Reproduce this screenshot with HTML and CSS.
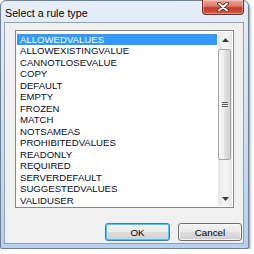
FILE: index.html
```html
<!DOCTYPE html>
<html>
<head>
<meta charset="utf-8">
<link rel="stylesheet" href="styles.css">
</head>
<body>
<div class="window">
  <div class="titlebar">
    <span class="title">Select a rule type</span>
    <div class="close">
      <svg width="14" height="10" viewBox="0 0 14 10">
        <path d="M3 1.5 L11 8.5 M11 1.5 L3 8.5" stroke="#5a1a14" stroke-width="3.6" stroke-linecap="round"/>
        <path d="M3 1.5 L11 8.5 M11 1.5 L3 8.5" stroke="#fff" stroke-width="2" stroke-linecap="round"/>
      </svg>
    </div>
  </div>
  <div class="client">
    <div class="listbox">
      <ul class="items">
        <li class="item selected">ALLOWEDVALUES</li>
        <li class="item">ALLOWEXISTINGVALUE</li>
        <li class="item">CANNOTLOSEVALUE</li>
        <li class="item">COPY</li>
        <li class="item">DEFAULT</li>
        <li class="item">EMPTY</li>
        <li class="item">FROZEN</li>
        <li class="item">MATCH</li>
        <li class="item">NOTSAMEAS</li>
        <li class="item">PROHIBITEDVALUES</li>
        <li class="item">READONLY</li>
        <li class="item">REQUIRED</li>
        <li class="item">SERVERDEFAULT</li>
        <li class="item">SUGGESTEDVALUES</li>
        <li class="item">VALIDUSER</li>
      </ul>
      <div class="scrollbar">
        <div class="sb-btn"><svg width="7" height="4" viewBox="0 0 7 4"><path d="M0 4 L3.5 0 L7 4 Z" fill="#3c3c3c"/></svg></div>
        <div class="sb-track">
          <div class="thumb"><span class="grip"></span></div>
        </div>
        <div class="sb-btn"><svg width="7" height="4" viewBox="0 0 7 4"><path d="M0 0 L7 0 L3.5 4 Z" fill="#3c3c3c"/></svg></div>
      </div>
    </div>
    <div class="buttons">
      <button class="btn default">OK</button>
      <button class="btn">Cancel</button>
    </div>
  </div>
</div>
</body>
</html>
```
FILE: styles.css
```css
html, body {
  margin: 0;
  padding: 0;
  background: #ffffff;
}
.window {
  box-sizing: border-box;
  width: 249px;
  height: 249px;
  border: 1px solid #6f8196;
  border-radius: 6px 6px 2px 2px;
  background: linear-gradient(180deg, #e6eef8 0%, #d3e2f3 40%, #b8d0ec 100%);
  padding: 0 4px 4px 3px;
  display: flex;
  flex-direction: column;
  box-shadow: 1px 2px 3px rgba(0,0,0,0.45);
}
.titlebar {
  height: 21px;
  display: flex;
  align-items: flex-start;
  justify-content: space-between;
  flex: none;
}
.title {
  font-family: "Liberation Sans", Arial, sans-serif;
  font-size: 10.7px;
  color: #000;
  margin: 6px 0 0 1px;
  text-shadow: 0 0 5px #fff, 0 0 8px #fff;
}
.close {
  width: 42px;
  height: 15px;
  margin-top: -1px;
  box-sizing: border-box;
  border: 1px solid #7b2a22;
  border-top: none;
  border-radius: 0 0 4px 4px;
  background: linear-gradient(180deg, #e9a596 0%, #d97a68 45%, #c23a2a 55%, #d35c48 100%);
  display: flex;
  align-items: center;
  justify-content: center;
  box-shadow: inset 0 0 0 1px rgba(255,255,255,0.35);
}
.client {
  flex: 1;
  box-sizing: border-box;
  background: #f0f0f0;
  border: 1px solid #8ea2ba;
  padding: 7px 0 0 10px;
  display: flex;
  flex-direction: column;
}
.listbox {
  box-sizing: border-box;
  width: 219px;
  height: 178px;
  border: 1px solid #828790;
  background: #fff;
  display: flex;
  padding: 1px;
}
.items {
  list-style: none;
  margin: 0;
  padding: 2px 0 0 0;
  flex: 1;
  overflow: hidden;
}
.item {
  font-family: "Liberation Sans", Arial, sans-serif;
  font-size: 9.6px;
  color: #0a0a1e;
  height: 11.48px;
  line-height: 11.48px;
  padding-left: 3px;
  white-space: nowrap;
}
.item.selected {
  background: #3399ff;
  color: #fff;
  margin-right: 1px;
}
.scrollbar {
  width: 14px;
  flex: none;
  display: flex;
  flex-direction: column;
  background: linear-gradient(90deg, #e6e6e6, #f4f4f4 40%, #f4f4f4 60%, #e6e6e6);
}
.sb-btn {
  height: 15px;
  flex: none;
  display: flex;
  align-items: center;
  justify-content: center;
}
.sb-track {
  flex: 1;
  display: flex;
  flex-direction: column;
  padding-top: 2px;
}
.thumb {
  box-sizing: border-box;
  height: 111px;
  margin: 0 1px 0 0;
  border: 1px solid #a4a4a4;
  border-radius: 2px;
  background: linear-gradient(90deg, #f6f6f6 0%, #eeeeee 45%, #dedede 55%, #d4d4d4 100%);
  display: flex;
  align-items: center;
  justify-content: center;
}
.grip {
  width: 6px;
  height: 6px;
  background: repeating-linear-gradient(180deg, #5a5a5a 0 1px, #e8e8e8 1px 2px);
}
.buttons {
  display: flex;
  justify-content: flex-end;
  gap: 8px;
  margin-top: 15px;
  padding-right: 1px;
}
.btn {
  box-sizing: border-box;
  width: 64px;
  height: 18px;
  padding: 0;
  font-family: "Liberation Sans", Arial, sans-serif;
  font-size: 9.8px;
  color: #000;
  border: 1px solid #707070;
  border-radius: 3px;
  background: linear-gradient(180deg, #f2f2f2 0%, #ebebeb 48%, #dddddd 52%, #cfcfcf 100%);
  box-shadow: inset 0 0 0 1px rgba(255,255,255,0.7);
}
.btn.default {
  width: 65px;
  border-color: #3c7fb1;
  box-shadow: inset 0 0 0 1px #48c7f4;
}
```
